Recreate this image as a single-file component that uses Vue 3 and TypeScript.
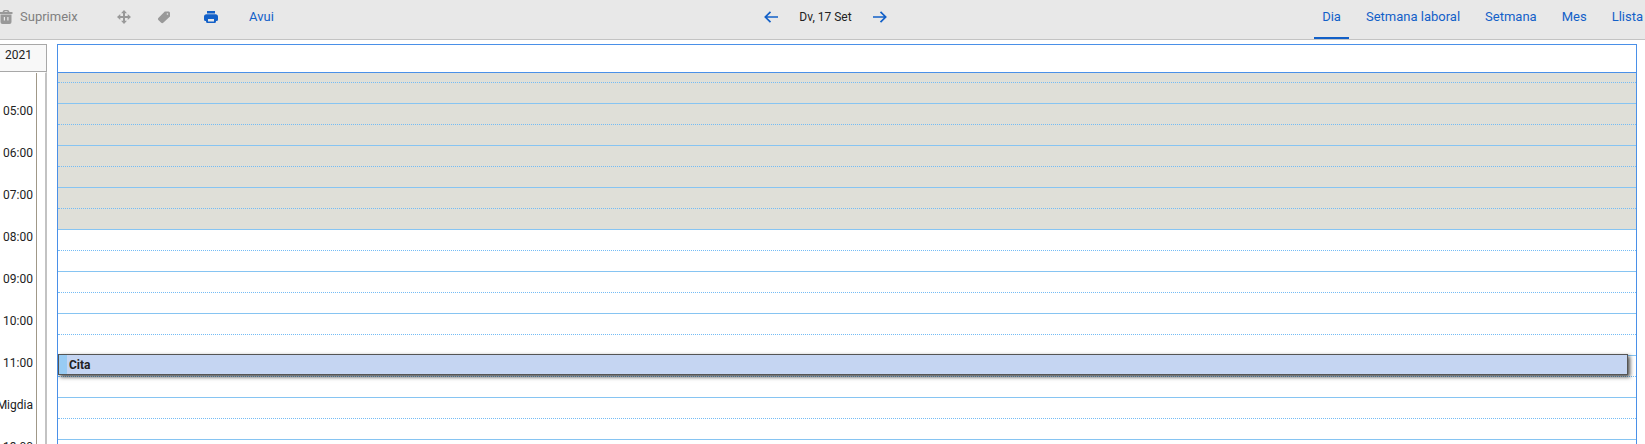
<script setup lang="ts">
import { ref } from 'vue'

const views = ['Dia', 'Setmana laboral', 'Setmana', 'Mes', 'Llista']
const activeView = ref('Dia')

interface Hour { label: string; working: boolean }
const hours: Hour[] = [
  { label: '04:00', working: false },
  { label: '05:00', working: false },
  { label: '06:00', working: false },
  { label: '07:00', working: false },
  { label: '08:00', working: true },
  { label: '09:00', working: true },
  { label: '10:00', working: true },
  { label: '11:00', working: true },
  { label: 'Migdia', working: true },
  { label: '13:00', working: true },
]
</script>

<template>
  <div class="app">
    <header class="toolbar">
      <div class="actions">
        <button class="action delete" type="button" disabled>
          <svg width="16" height="16" viewBox="0 0 16 16" fill="currentColor" aria-hidden="true">
            <path fill-rule="evenodd" d="M1.500 3H4.500Q5 1 6.500 1h3Q11 1 11.500 3H14.500V5h-13zM6.300 3h3.400Q9.500 2.200 9 2.200H7Q6.500 2.200 6.300 3zM2.500 5.500h11v7.500q0 2-2 2H4.500Q2.500 15 2.500 13zM5.800 8v3.500h1.200V8zm3.500 0v3.500h1.200V8z" />
          </svg>
          Suprimeix
        </button>
        <button class="action move" type="button" aria-label="Mou" disabled>
          <svg width="16" height="16" viewBox="0 0 16 16" fill="currentColor" aria-hidden="true">
            <path d="M8 1l3 3.300H9v2.700h2.700V5L15 8l-3.300 3V9H9v2.700H11L8 15l-3-3.300h2V9H4.300V11L1 8l3.300-3v2H7V4.300H5z" />
          </svg>
        </button>
        <button class="action tag" type="button" aria-label="Etiqueta" disabled>
          <svg width="16" height="16" viewBox="0 0 16 16" fill="currentColor" aria-hidden="true">
            <path fill-rule="evenodd" d="M8.800 2.500H12.500Q14 2.500 14 4V7.500L7.200 13.800q-1 .700-2 0L2.300 11q-.8-1 0-2zM11.400 4.200a.8.800 0 1 0 .1 1.600a.8.800 0 1 0-.1-1.600z" />
          </svg>
        </button>
        <button class="action print" type="button" aria-label="Imprimeix">
          <svg width="16" height="16" viewBox="0 0 16 16" fill="currentColor" aria-hidden="true">
            <path fill-rule="evenodd" d="M4 2h8v2.500H4zM3.500 5.200h9q2.500 0 2.500 2.500v2.800q0 1.500-1.500 1.500H13v.5q0 1.500-1.500 1.500h-7Q3 14 3 12.500V12h-.5Q1 12 1 10.500V7.700Q1 5.200 3.500 5.200zM5 10v2.600h6V10z" />
          </svg>
        </button>
        <button class="action today" type="button">Avui</button>
      </div>

      <div class="navigator">
        <button class="action" type="button" aria-label="Dia anterior">
          <svg width="16" height="16" viewBox="0 0 16 16" fill="none" stroke="currentColor" stroke-width="1.7" aria-hidden="true">
            <path d="M15 8H2.500M7.500 2.800L2.300 8L7.500 13.200" />
          </svg>
        </button>
        <span class="date">Dv, 17 Set</span>
        <button class="action" type="button" aria-label="Dia següent">
          <svg width="16" height="16" viewBox="0 0 16 16" fill="none" stroke="currentColor" stroke-width="1.7" aria-hidden="true">
            <path d="M1 8h12.500M8.500 2.800L13.700 8L8.500 13.200" />
          </svg>
        </button>
      </div>

      <nav class="views">
        <button
          v-for="view in views"
          :key="view"
          type="button"
          class="view"
          :class="{ active: view === activeView }"
          @click="activeView = view"
        >{{ view }}</button>
      </nav>
    </header>

    <main class="calendar">
      <aside class="times">
        <div class="year">2021</div>
        <div class="time-scroll">
          <div class="time-list">
            <div v-for="hour in hours" :key="hour.label" class="time">{{ hour.label }}</div>
          </div>
        </div>
      </aside>

      <section class="day">
        <div class="all-day"></div>
        <div class="grid-scroll">
          <div class="grid">
            <div v-for="hour in hours" :key="hour.label" class="hour" :class="{ off: !hour.working }">
              <div class="half"></div>
            </div>
            <article class="event"><span class="event-title">Cita</span></article>
          </div>
        </div>
      </section>
    </main>
  </div>
</template>

<style>
body {
  margin: 0;
  background: #fff;
}
</style>

<style scoped>
.app {
  display: flex;
  flex-direction: column;
  height: 100vh;
  overflow: hidden;
  font: 13px/16px Roboto, sans-serif;
  color: #222;
}

.toolbar {
  display: grid;
  grid-template-columns: 1fr auto 1fr;
  flex: none;
  height: 39px;
  background: #e8e8e8;
  border-bottom: 1px solid #c3c3c3;
}

.actions,
.navigator {
  display: flex;
  align-items: center;
  height: 34px;
}

.action {
  display: flex;
  align-items: center;
  gap: 6px;
  padding: 0;
  border: 0;
  background: none;
  font: inherit;
  color: #1260c8;
}

.action:disabled {
  color: #999;
}

.action svg {
  display: block;
}

.actions {
  margin-left: -2px;
}

.action.delete {
  width: 118px;
}

.action.delete:disabled {
  color: #808080;
}

.action.delete svg {
  color: #999;
}

.action.move {
  width: 40px;
}

.action.tag {
  width: 47px;
}

.action.print {
  width: 46px;
}

.navigator {
  gap: 20px;
  padding-left: 6px;
}

.date {
  font-size: 12px;
}

.views {
  display: flex;
  justify-content: flex-end;
  gap: 9px;
  margin-right: -6px;
}

.view {
  height: 39px;
  padding: 0 8px 5px;
  border: 0;
  background: none;
  font: inherit;
  color: #1260c8;
  white-space: nowrap;
}

.view.active {
  padding-bottom: 3px;
  border-bottom: 2px solid #1260c8;
}

.calendar {
  display: flex;
  flex: 1;
  min-height: 0;
  margin: 4px 8px 0 0;
  gap: 10px;
}

.times {
  display: flex;
  flex: none;
  flex-direction: column;
  box-sizing: border-box;
  width: 47px;
}

.year {
  box-sizing: border-box;
  flex: none;
  height: 28px;
  padding: 2px 14px 0 0;
  border: 1px solid #a8a8a8;
  border-left: 0;
  background: #f8f8f8;
  font-size: 12px;
  text-align: right;
}

.time-scroll {
  flex: 1;
  min-height: 0;
  overflow: hidden;
  border-top: 1px solid #fff;
  border-right: 2px solid #c3c3c3;
}

.time-list {
  box-sizing: border-box;
  width: 37px;
  margin-top: -11px;
  border-right: 1px solid #a09888;
}

.time {
  display: flex;
  justify-content: flex-end;
  height: 42px;
  padding-right: 3px;
  font-size: 12px;
  line-height: 14px;
}

.day {
  display: flex;
  flex: 1;
  flex-direction: column;
  min-width: 0;
  border: 1px solid #4a90e8;
  border-bottom: 0;
}

.all-day {
  flex: none;
  height: 27px;
  border-bottom: 1px solid #4a90e8;
}

.grid-scroll {
  flex: 1;
  min-height: 0;
  overflow: hidden;
}

.grid {
  position: relative;
  margin-top: -11px;
}

.hour {
  box-sizing: border-box;
  height: 42px;
  border-bottom: 1px solid #86c4f2;
}

.hour.off {
  background: #dfdfd8;
}

.half {
  box-sizing: border-box;
  height: 21px;
  border-bottom: 1px dotted #74bcf5;
}

.event {
  position: absolute;
  top: 292px;
  right: 8px;
  left: 0;
  box-sizing: border-box;
  height: 21px;
  border: 1px solid #555;
  background: linear-gradient(to right, #98cbf3 8px, #c5d5f2 8px);
  box-shadow: 2px 2px 4px rgba(0, 0, 0, 0.7);
}

.event-title {
  display: block;
  padding-left: 10px;
  font-size: 12px;
  font-weight: 700;
  line-height: 20px;
}
</style>
